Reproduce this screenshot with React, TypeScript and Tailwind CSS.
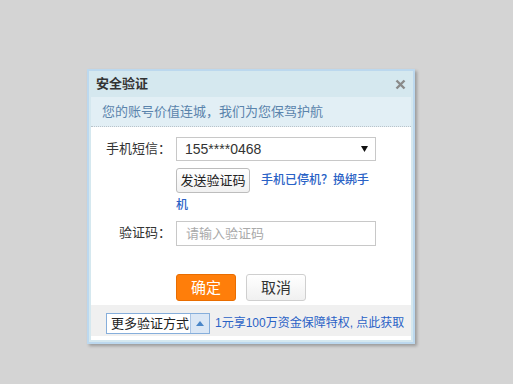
const font = "font-['Liberation_Sans','Noto_Sans_CJK_SC',sans-serif]";

function CloseIcon() {
  return (
    <svg width="11" height="11" viewBox="0 0 11 11" className="block">
      <path d="M1.5 1.5 L9.5 9.5 M9.5 1.5 L1.5 9.5" stroke="#8a8a8a" strokeWidth="2.4" />
    </svg>
  );
}

function FormRow({ label, children, className = "" }: { label: string; children: React.ReactNode; className?: string }) {
  return (
    <div className={`flex items-start ${className}`}>
      <div className="w-[80px] text-right text-[13px] leading-[24px] text-[#333]">{label}</div>
      <div className="ml-[5px] w-[200px]">{children}</div>
    </div>
  );
}

export default function App() {
  return (
    <div className={`min-h-[384px] w-full bg-[#d4d4d4] pl-[87px] pt-[69px] ${font}`}>
      <div className="w-[328px] border-2 border-[#bcd8ee] bg-[#d5e8ef] shadow-[2px_2px_3px_rgba(0,0,0,0.28)]">
        {/* header */}
        <div className="flex h-[26px] items-center justify-between pl-[7px] pr-[7px]">
          <span className="text-[13px] font-bold leading-[26px] text-[#333]">安全验证</span>
          <CloseIcon />
        </div>

        <div className="mx-[2px] mb-[2px] bg-white pb-[4px]">
          {/* banner */}
          <div className="h-[30px] border-b border-dotted border-[#b9c3ca] bg-[#e2eff5] pl-[11px] text-[13px] leading-[29px] text-[#5a84ac]">
            您的账号价值连城，我们为您保驾护航
          </div>

          <FormRow label="手机短信：" className="mt-[10px]">
            <div className="flex h-[24px] items-center justify-between border border-[#c8c8c8] pl-[8px] pr-[7px]">
              <span className="text-[14px] text-[#333]">155****0468</span>
              <svg width="7" height="6" viewBox="0 0 7 6">
                <path d="M0 0 H7 L3.5 6 Z" fill="#111" />
              </svg>
            </div>
          </FormRow>

          {/* send code + rebind link */}
          <div className="mt-[7px] ml-[85px] w-[200px] text-[12px] leading-[25px]">
            <div className="flex items-start">
              <button className="h-[25px] w-[74px] whitespace-nowrap rounded-[3px] border border-[#bdbdbd] bg-gradient-to-b from-white to-[#f1f1f1] p-0 text-[13px] leading-[23px] text-[#222]">
                发送验证码
              </button>
              <a className="ml-[11px] cursor-pointer whitespace-nowrap font-medium text-[#2a62c6]">
                手机已停机？换绑手
              </a>
            </div>
            <a className="block cursor-pointer font-medium text-[#2a62c6]">机</a>
          </div>

          <FormRow label="验证码：" className="mt-[3px]">
            <div className="flex h-[25px] items-center border border-[#c8c8c8] pl-[9px] text-[13px] text-[#aaa]">
              请输入验证码
            </div>
          </FormRow>

          <div className="mt-[28px] ml-[85px] flex gap-[10px]">
            <button className="h-[27px] w-[60px] rounded-[3px] border border-[#e96d00] bg-[#ff7e0a] text-[15px] leading-[25px] text-white">
              确定
            </button>
            <button className="h-[27px] w-[60px] rounded-[3px] border border-[#cfcfcf] bg-gradient-to-b from-white to-[#f0f0f0] text-[15px] leading-[25px] text-[#333]">
              取消
            </button>
          </div>

          {/* footer */}
          <div className="mt-[4px] flex h-[31px] items-start bg-[#f0f0f0] pl-[15px] pt-[8px]">
            <div className="flex h-[21px] w-[104px] border border-[#86aedb] bg-white">
              <span className="flex-1 whitespace-nowrap pl-[4px] text-[13px] leading-[19px] text-[#222]">更多验证方式</span>
              <span className="flex w-[19px] items-center justify-center border-l border-[#a9c4e4] bg-[#dbe7f5]">
                <svg width="8" height="5" viewBox="0 0 8 5">
                  <path d="M0 5 L4 0 L8 5 Z" fill="#4a86c8" />
                </svg>
              </span>
            </div>
            <a className="ml-[5px] cursor-pointer whitespace-nowrap text-[12px] leading-[21px] text-[#2a62c6]">
              1元享100万资金保障特权, 点此获取
            </a>
          </div>
        </div>
      </div>
    </div>
  );
}
